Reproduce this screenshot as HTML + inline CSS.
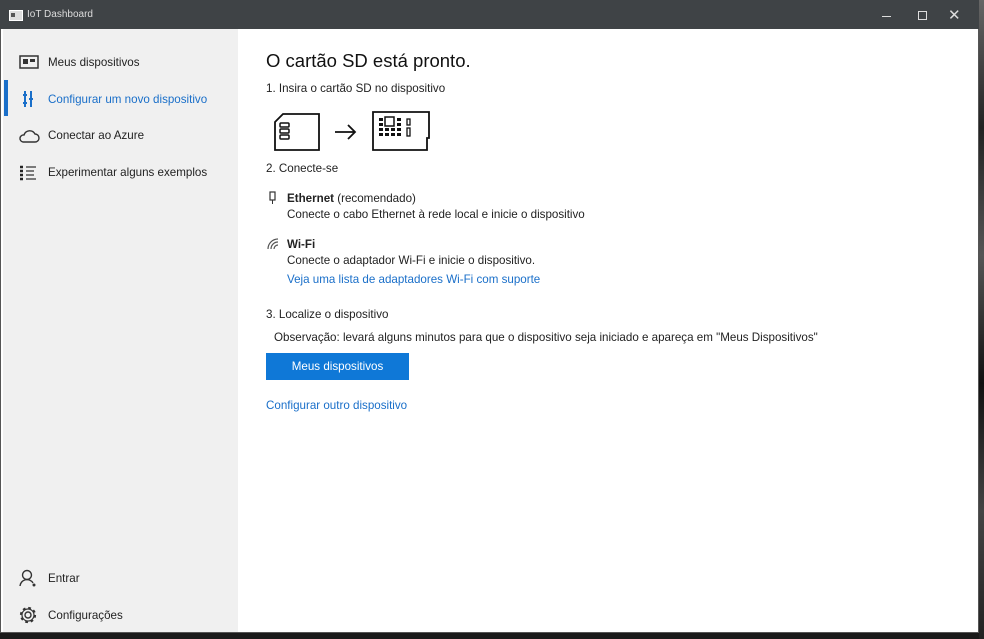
<!DOCTYPE html>
<html><head><meta charset="utf-8"><style>
*{margin:0;padding:0;box-sizing:border-box}
body{width:984px;height:639px;background:#1a1a1a;position:relative;overflow:hidden;font-family:"Liberation Sans",sans-serif;color:#222}
.t{position:absolute;white-space:nowrap;font-size:11.6px}
#win{position:absolute;left:0;top:0;width:979px;height:633px;background:#fff;border:1px solid #555}
#tb{position:absolute;left:0;top:0;width:979px;height:29px;background:#3f4346;color:#eee}
#side{position:absolute;left:3px;top:29px;width:235px;height:603px;background:#f0f0f0}
.nav{font-size:11.6px;color:#222}
a{color:#1a6fc9;text-decoration:none}
</style></head><body>
<div style="position:absolute;left:979px;top:0;width:5px;height:639px;background:linear-gradient(#666,#222 20%,#555 40%,#111 60%,#444 80%,#222)"></div>
<div id="win"></div>
<div id="tb">
<svg style="position:absolute;left:9px;top:10px" width="14" height="11"><rect x="0.5" y="0.5" width="13" height="10" fill="#ddd" stroke="#fff"/><rect x="2" y="3" width="4" height="4" fill="#555"/></svg>
<div class="t" style="left:27px;top:9px;font-size:10px;color:#ddd">IoT Dashboard</div>
<div style="position:absolute;left:882px;top:16px;width:9px;height:1px;background:#ddd"></div>
<div style="position:absolute;left:918px;top:11px;width:9px;height:9px;border:1px solid #ddd"></div>
<div class="t" style="left:948px;top:6px;font-size:15px;color:#ddd">✕</div>
</div>
<div id="side"></div>
<svg style="position:absolute;left:19px;top:55px" width="20" height="14"><rect x="1" y="1" width="18" height="12" fill="none" stroke="#333" stroke-width="1.5"/><rect x="4" y="4" width="5" height="5" fill="#333"/><rect x="11" y="4" width="5" height="3" fill="#333"/></svg>
<div class="t nav" style="left:48px;top:56px">Meus dispositivos</div>
<div style="position:absolute;left:4px;top:80px;width:4px;height:36px;background:#1a6fc9"></div>
<svg style="position:absolute;left:22px;top:90px" width="12" height="18"><path d="M3 1v16M9 1v16M1 5h4M7 9h4M1 13h4" stroke="#1a6fc9" stroke-width="2" fill="none"/></svg>
<div class="t nav" style="left:48px;top:93px;color:#1a6fc9">Configurar um novo dispositivo</div>
<svg style="position:absolute;left:18px;top:129px" width="22" height="14"><path d="M5 13h12a4 4 0 0 0 0-8 6 6 0 0 0-11 1 3.5 3.5 0 0 0-1 7z" fill="none" stroke="#333" stroke-width="1.4"/></svg>
<div class="t nav" style="left:48px;top:129px">Conectar ao Azure</div>
<svg style="position:absolute;left:19px;top:165px" width="18" height="16"><path d="M1 2h3M1 6h3M1 10h3M1 14h3" stroke="#222" stroke-width="2.5"/><path d="M7 2h10M7 6h8M7 10h8M7 14h10" stroke="#333" stroke-width="1.2"/></svg>
<div class="t nav" style="left:48px;top:166px">Experimentar alguns exemplos</div>
<svg style="position:absolute;left:19px;top:569px" width="18" height="18"><circle cx="8" cy="6" r="4.5" fill="none" stroke="#333" stroke-width="1.4"/><path d="M1 17a7 7 0 0 1 13-3" fill="none" stroke="#333" stroke-width="1.4"/><circle cx="15" cy="16" r="1.5" fill="#333"/></svg>
<div class="t nav" style="left:48px;top:572px">Entrar</div>
<svg style="position:absolute;left:18px;top:605px" width="20" height="20"><circle cx="10" cy="10" r="3" fill="none" stroke="#333" stroke-width="1.4"/><circle cx="10" cy="10" r="7" fill="none" stroke="#333" stroke-width="2.2" stroke-dasharray="2.7 2.8"/><circle cx="10" cy="10" r="6" fill="none" stroke="#333" stroke-width="1.2"/></svg>
<div class="t nav" style="left:48px;top:609px">Configurações</div>
<div class="t" style="left:266px;top:50px;font-size:18.5px;color:#111">O cartão SD está pronto.</div>
<div class="t" style="left:266px;top:82px">1. Insira o cartão SD no dispositivo</div>
<svg style="position:absolute;left:270px;top:110px" width="162" height="42">
<path d="M5 40V12l8-8h36v36z" fill="#fff" stroke="#111" stroke-width="1.8"/>
<rect x="10" y="13" width="9" height="4" rx="1" fill="none" stroke="#111" stroke-width="1.5"/><rect x="10" y="19" width="9" height="4" rx="1" fill="none" stroke="#111" stroke-width="1.5"/><rect x="10" y="25" width="9" height="4" rx="1" fill="none" stroke="#111" stroke-width="1.5"/>
<path d="M65 22h20M78 15l7 7-7 7" fill="none" stroke="#111" stroke-width="1.8"/>
<path d="M103 2h56v26h-2v12h-54z" fill="none" stroke="#111" stroke-width="1.8"/>
<g fill="#111"><rect x="109" y="8" width="4" height="3"/><rect x="109" y="13" width="4" height="3"/><rect x="109" y="18" width="4" height="3"/><rect x="109" y="23" width="4" height="3"/><rect x="115" y="18" width="4" height="3"/><rect x="115" y="23" width="4" height="3"/><rect x="121" y="18" width="4" height="3"/><rect x="121" y="23" width="4" height="3"/><rect x="127" y="8" width="4" height="3"/><rect x="127" y="13" width="4" height="3"/><rect x="127" y="18" width="4" height="3"/><rect x="127" y="23" width="4" height="3"/></g>
<rect x="115" y="7" width="9" height="9" fill="none" stroke="#111" stroke-width="1.5"/>
<rect x="137" y="9" width="3" height="6" fill="none" stroke="#111" stroke-width="1.3"/><rect x="137" y="18" width="3" height="8" fill="none" stroke="#111" stroke-width="1.3"/>
</svg>
<div class="t" style="left:266px;top:162px">2. Conecte-se</div>
<svg style="position:absolute;left:269px;top:191px" width="8" height="14"><rect x="1" y="1" width="5" height="8" fill="none" stroke="#333" stroke-width="1.2"/><path d="M3.5 9v4" stroke="#333"/></svg>
<div class="t" style="left:287px;top:192px"><b>Ethernet</b> (recomendado)</div>
<div class="t" style="left:287px;top:208px">Conecte o cabo Ethernet à rede local e inicie o dispositivo</div>
<svg style="position:absolute;left:267px;top:238px" width="14" height="12"><path d="M1 11a10 10 0 0 1 10-10M4 11a7 7 0 0 1 7-7M7 11a4 4 0 0 1 4-4" fill="none" stroke="#555" stroke-width="1.2"/></svg>
<div class="t" style="left:287px;top:238px"><b>Wi-Fi</b></div>
<div class="t" style="left:287px;top:254px">Conecte o adaptador Wi-Fi e inicie o dispositivo.</div>
<div class="t" style="left:287px;top:273px"><a>Veja uma lista de adaptadores Wi-Fi com suporte</a></div>
<div class="t" style="left:266px;top:308px">3. Localize o dispositivo</div>
<div class="t" style="left:274px;top:331px">Observação: levará alguns minutos para que o dispositivo seja iniciado e apareça em "Meus Dispositivos"</div>
<div style="position:absolute;left:266px;top:353px;width:143px;height:27px;background:#0f78d7;color:#fff;font-size:11.6px;text-align:center;line-height:27px">Meus dispositivos</div>
<div class="t" style="left:266px;top:399px"><a>Configurar outro dispositivo</a></div>
</body></html>
